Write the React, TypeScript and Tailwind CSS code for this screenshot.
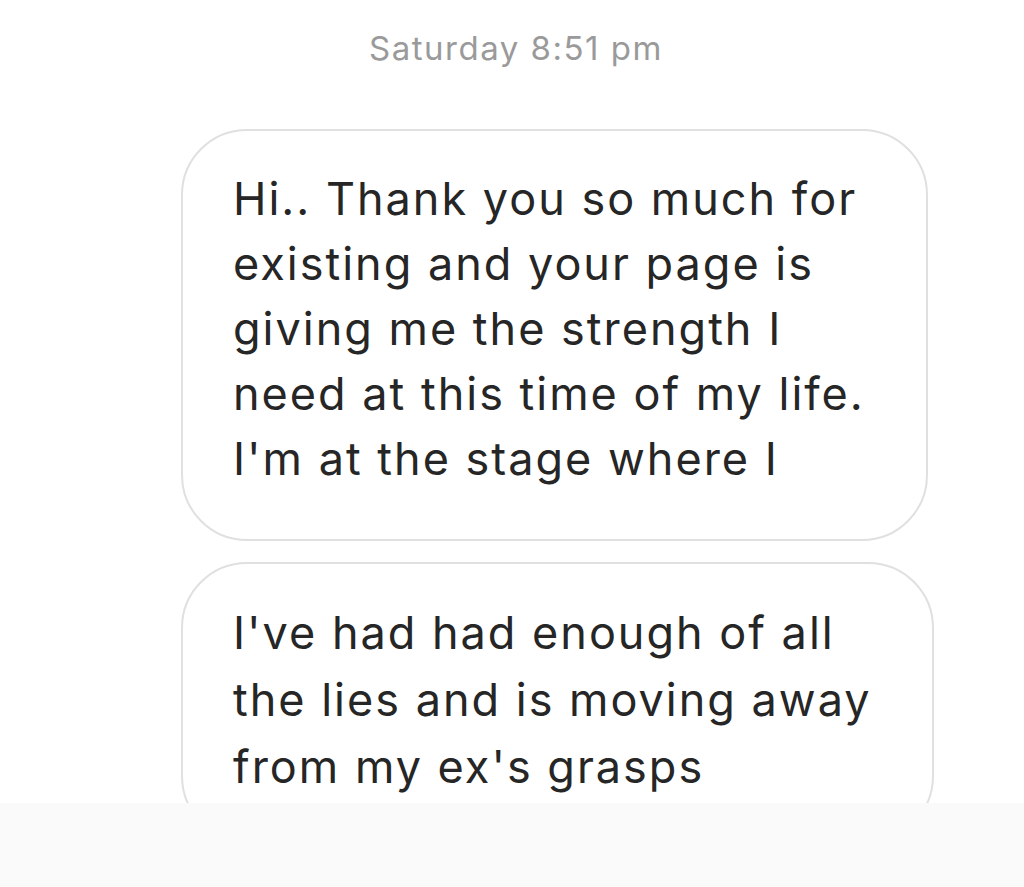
import React from "react";

export default function App() {
  return (
    <div
      className="w-[1024px] h-[887px] bg-white flex flex-col overflow-hidden"
      style={{ fontFamily: 'Inter, "Liberation Sans", Arial, sans-serif' }}
    >
      <div className="h-[803px] overflow-hidden flex flex-col">
        <div className="pt-[28px] pl-[8px] text-center text-[33px] leading-[40px] tracking-[1.5px] text-[#9a9a9a]">
          Saturday 8:51 pm
        </div>
        <div className="mt-[61px] ml-[181px] w-[747px] h-[412px] shrink-0 rounded-[66px] border-2 border-[#e0e0e0] pl-[50px] pt-[35px] text-[45px] leading-[65px] tracking-[2px] text-[#262626]">
          <div>Hi.. Thank you so much for</div>
          <div>existing and your page is</div>
          <div>giving me the strength I</div>
          <div>need at this time of my life.</div>
          <div>I'm at the stage where I</div>
        </div>
        <div className="mt-[21px] ml-[181px] w-[753px] h-[280px] shrink-0 rounded-[66px] border-2 border-[#e0e0e0] pl-[50px] pt-[35px] text-[45px] leading-[67px] tracking-[2px] text-[#262626]">
          <div>I've had had enough of all</div>
          <div>the lies and is moving away</div>
          <div>from my ex's grasps</div>
        </div>
      </div>
      <div className="flex-1 bg-[#fafafa]" />
    </div>
  );
}
